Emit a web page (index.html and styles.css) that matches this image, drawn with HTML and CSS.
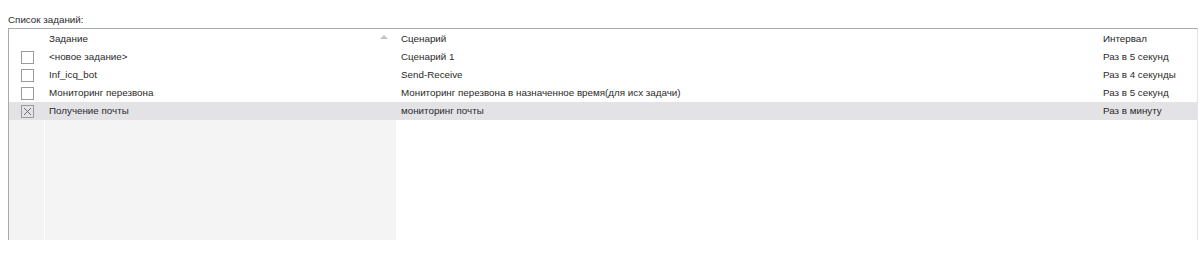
FILE: index.html
```html
<!DOCTYPE html>
<html lang="ru">
<head>
<meta charset="utf-8">
<link rel="stylesheet" href="styles.css">
</head>
<body>
<div class="panel">
  <div class="label">Список заданий:</div>
  <div class="grid">
    <div class="gutter hdr"></div>
    <div class="cell hdr sorted">Задание<span class="arrow"></span></div>
    <div class="cell hdr">Сценарий</div>
    <div class="cell hdr">Интервал</div>

    <div class="gutter"><span class="box"></span></div>
    <div class="cell">&lt;новое задание&gt;</div>
    <div class="cell">Сценарий 1</div>
    <div class="cell">Раз в 5 секунд</div>

    <div class="gutter"><span class="box"></span></div>
    <div class="cell">Inf_icq_bot</div>
    <div class="cell">Send-Receive</div>
    <div class="cell">Раз в 4 секунды</div>

    <div class="gutter"><span class="box"></span></div>
    <div class="cell">Мониторинг перезвона</div>
    <div class="cell">Мониторинг перезвона в назначенное время(для исх задачи)</div>
    <div class="cell">Раз в 5 секунд</div>

    <div class="gutter sel"><span class="box checked"><svg viewBox="0 0 11 11" width="11" height="11"><path d="M2 2 L9 9 M9 2 L2 9" stroke="#6d6d6d" stroke-width="1" fill="none"/></svg></span></div>
    <div class="cell sel">Получение почты</div>
    <div class="cell sel">мониторинг почты</div>
    <div class="cell sel">Раз в минуту</div>

    <div class="fill gutter-fill"></div>
    <div class="fill first-fill"></div>
    <div class="fill"></div>
    <div class="fill"></div>
  </div>
</div>
</body>
</html>
```
FILE: styles.css
```css
html, body {
  margin: 0;
  padding: 0;
  background: #ffffff;
}
body {
  font-family: "Liberation Sans", Arial, sans-serif;
  font-size: 9.8px;
  color: #2a2a2a;
}
.panel {
  display: flex;
  flex-direction: column;
  padding: 13px 0 0 8px;
  height: 254px;
  box-sizing: border-box;
}
.label {
  height: 14px;
  line-height: 14px;
  color: #2a2a2a;
}
.grid {
  margin-top: 1px;
  width: 1190px;
  height: 212px;
  box-sizing: border-box;
  border-top: 1px solid #a9a9a9;
  border-left: 1px solid #a9a9a9;
  border-right: 1px solid #e4e4e4;
  display: grid;
  grid-template-columns: 35px 352px 702px 1fr;
  grid-template-rows: 19px repeat(4, 18px) 1fr;
  overflow: hidden;
}
.cell {
  padding-left: 5px;
  line-height: 18px;
  white-space: nowrap;
  overflow: hidden;
  background: #ffffff;
}
.cell.hdr {
  line-height: 19px;
  color: #1f1f1f;
}
.sorted {
  display: flex;
  align-items: center;
  justify-content: space-between;
  padding-right: 8px;
}
.arrow {
  width: 0;
  height: 0;
  border-left: 4px solid transparent;
  border-right: 4px solid transparent;
  border-bottom: 4px solid #c4c4c4;
  margin-top: -3px;
}
.gutter {
  display: flex;
  align-items: center;
  justify-content: center;
  padding-left: 1px;
  background: #ffffff;
}
.box {
  width: 11px;
  height: 11px;
  border: 1px solid #9a9a9a;
  background: #ffffff;
  display: flex;
}
.box.checked {
  background: transparent;
}
.sel {
  background: #e3e3e6;
}
.fill {
  background: #ffffff;
}
.gutter-fill {
  background: #f3f3f3;
}
.first-fill {
  background: #f4f4f4;
  border-left: 1px solid #ffffff;
}
```
